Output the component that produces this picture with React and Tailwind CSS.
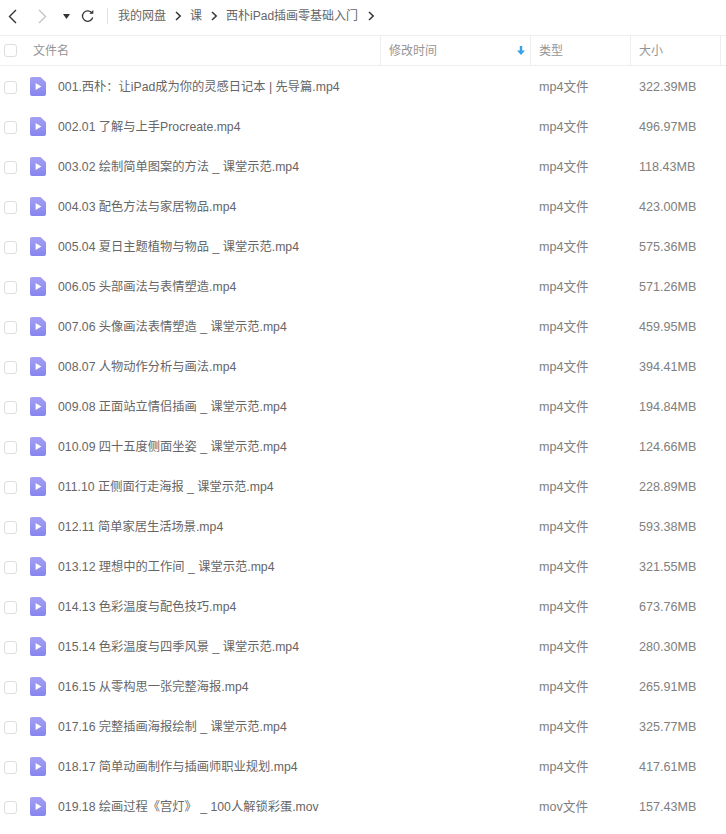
const files = [
  ['001.西朴：让iPad成为你的灵感日记本 | 先导篇.mp4', 'mp4文件', '322.39MB'],
  ['002.01 了解与上手Procreate.mp4', 'mp4文件', '496.97MB'],
  ['003.02 绘制简单图案的方法 _ 课堂示范.mp4', 'mp4文件', '118.43MB'],
  ['004.03 配色方法与家居物品.mp4', 'mp4文件', '423.00MB'],
  ['005.04 夏日主题植物与物品 _ 课堂示范.mp4', 'mp4文件', '575.36MB'],
  ['006.05 头部画法与表情塑造.mp4', 'mp4文件', '571.26MB'],
  ['007.06 头像画法表情塑造 _ 课堂示范.mp4', 'mp4文件', '459.95MB'],
  ['008.07 人物动作分析与画法.mp4', 'mp4文件', '394.41MB'],
  ['009.08 正面站立情侣插画 _ 课堂示范.mp4', 'mp4文件', '194.84MB'],
  ['010.09 四十五度侧面坐姿 _ 课堂示范.mp4', 'mp4文件', '124.66MB'],
  ['011.10 正侧面行走海报 _ 课堂示范.mp4', 'mp4文件', '228.89MB'],
  ['012.11 简单家居生活场景.mp4', 'mp4文件', '593.38MB'],
  ['013.12 理想中的工作间 _ 课堂示范.mp4', 'mp4文件', '321.55MB'],
  ['014.13 色彩温度与配色技巧.mp4', 'mp4文件', '673.76MB'],
  ['015.14 色彩温度与四季风景 _ 课堂示范.mp4', 'mp4文件', '280.30MB'],
  ['016.15 从零构思一张完整海报.mp4', 'mp4文件', '265.91MB'],
  ['017.16 完整插画海报绘制 _ 课堂示范.mp4', 'mp4文件', '325.77MB'],
  ['018.17 简单动画制作与插画师职业规划.mp4', 'mp4文件', '417.61MB'],
  ['019.18 绘画过程《宫灯》 _ 100人解锁彩蛋.mov', 'mov文件', '157.43MB'],
];

function Checkbox() {
  return <span className="block w-[13px] h-[13px] shrink-0 rounded-[3px] border border-[#dedede] bg-white" />;
}

function VideoIcon() {
  return (
    <svg width="16" height="19" viewBox="0 0 16 19" className="block shrink-0">
      <defs>
        <linearGradient id="fileGrad" x1="0" y1="0" x2="0" y2="1">
          <stop offset="0" stopColor="#a5a0f3" />
          <stop offset="1" stopColor="#8585ee" />
        </linearGradient>
      </defs>
      <path d="M2 0h8.5L16 5.2V17a2 2 0 0 1-2 2H2a2 2 0 0 1-2-2V2a2 2 0 0 1 2-2z" fill="url(#fileGrad)" />
      <path d="M5.6 6v7l5.8-3.5z" fill="#fff" />
    </svg>
  );
}

function Sep() {
  return (
    <svg width="7" height="10" viewBox="0 0 7 10" className="block shrink-0">
      <path d="M1 1l4.2 4-4.2 4" fill="none" stroke="#333" strokeWidth="1.5" />
    </svg>
  );
}

export default function App() {
  return (
    <div className="w-[726px] h-[834px] overflow-hidden bg-white text-[#666] font-['Liberation_Sans','Noto_Sans_CJK_SC',sans-serif]">
      {/* toolbar */}
      <div className="flex items-center h-[36px] border-b border-[#eeeeee] pl-[8px] pb-[3px]">
        <svg width="9" height="15" viewBox="0 0 9 15" className="shrink-0">
          <path d="M8 1L1.5 7.5 8 14" fill="none" stroke="#333" strokeWidth="1.4" />
        </svg>
        <svg width="9" height="15" viewBox="0 0 9 15" className="shrink-0 ml-[21px]">
          <path d="M1 1l6.5 6.5L1 14" fill="none" stroke="#c4c4c4" strokeWidth="1.4" />
        </svg>
        <svg width="7" height="5" viewBox="0 0 7 5" className="shrink-0 ml-[16px]">
          <path d="M0 0h7L3.5 5z" fill="#333" />
        </svg>
        <svg width="13" height="13" viewBox="0 0 13 13" className="shrink-0 ml-[11px]">
          <path d="M11 3.2A5.2 5.2 0 1 0 11.7 7.5" fill="none" stroke="#333" strokeWidth="1.3" />
          <path d="M8.3 3.8h4V0z" fill="#333" />
        </svg>
        <span className="w-px h-[16px] bg-[#e4e4e4] ml-[13px]" />
        <div className="flex items-center ml-[10px] text-[#666] text-[12px]">
          <span>我的网盘</span>
          <span className="ml-[9px]"><Sep /></span>
          <span className="ml-[8px]">课</span>
          <span className="ml-[9px]"><Sep /></span>
          <span className="ml-[8px]">西朴iPad插画零基础入门</span>
          <span className="ml-[10px]"><Sep /></span>
        </div>
      </div>

      {/* column header */}
      <div className="flex items-center h-[30px] border-b border-[#eeeeee] text-[12px] text-[#959595]">
        <div className="flex items-center w-[381px] h-[29px] pl-[4px] border-r border-[#eeeeee]">
          <Checkbox />
          <span className="ml-[16px]">文件名</span>
        </div>
        <div className="flex items-center justify-between w-[150px] h-[29px] pl-[8px] pr-[5px] border-r border-[#eeeeee]">
          <span>修改时间</span>
          <svg width="8" height="9" viewBox="0 0 8 9" className="shrink-0">
            <path d="M2.8 0h2.4v4.5H8L4 9 0 4.5h2.8z" fill="#3aa0e8" />
          </svg>
        </div>
        <div className="flex items-center w-[100px] h-[29px] pl-[8px] border-r border-[#eeeeee]">类型</div>
        <div className="flex items-center w-[90px] h-[29px] pl-[8px] border-r border-[#eeeeee]">大小</div>
      </div>

      {/* rows */}
      <div className="pt-[1px]">
        {files.map(([name, type, size]) => (
          <div key={name} className="flex items-center h-[40px]">
            <div className="flex items-center w-[381px] pl-[4px]">
              <Checkbox />
              <span className="ml-[13px] -mt-[1px]"><VideoIcon /></span>
              <span className="ml-[12px] whitespace-nowrap text-[12.25px] text-[#666]">{name}</span>
            </div>
            <div className="w-[150px]" />
            <div className="w-[108px] pl-[8px] text-[12.6px] text-[#808080]">{type}</div>
            <div className="text-[12.6px] text-[#808080]">{size}</div>
          </div>
        ))}
      </div>
    </div>
  );
}
